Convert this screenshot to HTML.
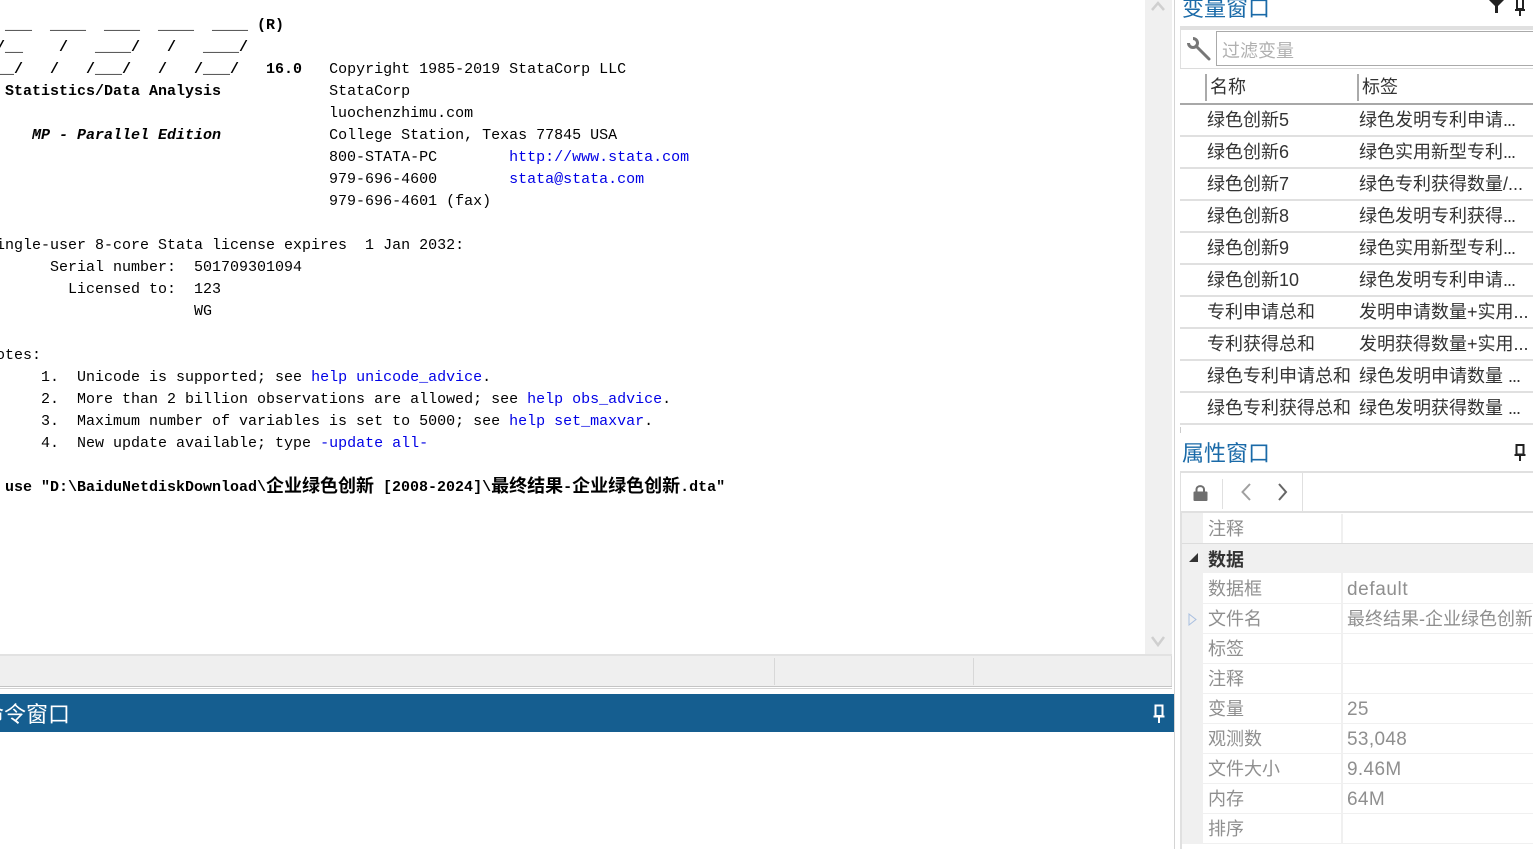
<!DOCTYPE html>
<html lang="zh"><head><meta charset="utf-8"><title>Stata</title>
<style>
html,body{margin:0;padding:0;background:#fff}
#p{position:relative;width:1533px;height:849px;overflow:hidden;background:#fff}
.a{position:absolute}
pre{position:absolute;left:-13px;top:15px;margin:0;font:15px/22px "Liberation Mono",monospace;color:#000;white-space:pre}
pre b{font-weight:bold}
pre i{font-weight:bold;font-style:italic}
pre u{text-decoration:none;color:#0000e6}
.c{font-family:"Noto Sans CJK SC",sans-serif;font-size:18px;letter-spacing:0;font-weight:bold;line-height:0;position:relative;top:1px}
.s{font-family:"Liberation Sans","Noto Sans CJK SC",sans-serif;white-space:nowrap}
.t{font-size:22px;color:#1a6aa8;line-height:30px;left:1182px}
.r{font-size:18px;color:#333;line-height:26px}
.g{font-size:18px;color:#8f8f8f;line-height:26px}
.d{letter-spacing:-1px}
.v{font-size:19px;letter-spacing:.35px}
</style></head><body><div id="p">
<pre><b>  ___  ____  ____  ____  ____ (R)
 /__    /   ____/   /   ____/
___/   /   /___/   /   /___/   16.0   </b>Copyright 1985-2019 StataCorp LLC
<b>  Statistics/Data Analysis</b>            StataCorp
                                      luochenzhimu.com
     <i>MP - Parallel Edition</i>            College Station, Texas 77845 USA
                                      800-STATA-PC        <u>http://www.stata.com</u>
                                      979-696-4600        <u>stata@stata.com</u>
                                      979-696-4601 (fax)

Single-user 8-core Stata license expires  1 Jan 2032:
       Serial number:  501709301094
         Licensed to:  123
                       WG

Notes:
      1.  Unicode is supported; see <u>help unicode_advice</u>.
      2.  More than 2 billion observations are allowed; see <u>help obs_advice</u>.
      3.  Maximum number of variables is set to 5000; see <u>help set_maxvar</u>.
      4.  New update available; type <u>-update all-</u>

<b>. use "D:\BaiduNetdiskDownload\<span class="c">企业绿色创新</span> [2008-2024]\<span class="c">最终结果</span>-<span class="c">企业绿色创新</span>.dta"</b></pre>

<!-- scrollbar -->
<div class="a" style="left:1145px;top:0;width:27px;height:654px;background:#f0f0f0"></div>
<svg class="a" style="left:1150px;top:0" width="16" height="14"><path d="M2 10L8 3L14 10" fill="none" stroke="#cfcfcf" stroke-width="2.5"/></svg>
<svg class="a" style="left:1150px;top:634px" width="16" height="14"><path d="M2 3L8 11L14 3" fill="none" stroke="#cfcfcf" stroke-width="2.5"/></svg>

<!-- status bar -->
<div class="a" style="left:0;top:654px;width:1172px;height:2px;background:#e2e2e2"></div>
<div class="a" style="left:0;top:656px;width:1172px;height:30px;background:#efefef"></div>
<div class="a" style="left:774px;top:658px;width:1px;height:27px;background:#d8d8d8"></div>
<div class="a" style="left:973px;top:658px;width:1px;height:27px;background:#d8d8d8"></div>
<div class="a" style="left:0;top:686px;width:1172px;height:1px;background:#c4c4c4"></div>
<div class="a" style="left:0;top:688px;width:1172px;height:1px;background:#d4d4d4"></div>
<div class="a" style="left:1171px;top:656px;width:1px;height:30px;background:#dcdcdc"></div>

<!-- command bar -->
<div class="a" style="left:0;top:694px;width:1174px;height:38px;background:#155e90"></div>
<div class="a s" style="left:-18px;top:700px;font-size:22px;line-height:30px;color:#fff">命令窗口</div>
<svg class="a" style="left:1152px;top:704px" width="14" height="20"><path d="M3.500 1.500H10.500V12H3.500ZM1.500 12.500H12.500M7 13V19" fill="none" stroke="#fff" stroke-width="2"/></svg>

<!-- vertical splitter -->
<div class="a" style="left:1174px;top:0;width:1px;height:849px;background:#d4d4d4"></div>

<!-- variables window -->
<div class="a s t" style="top:-6px">变量窗口</div>
<svg class="a" style="left:1488px;top:0" width="18" height="14"><path d="M1 0H16L10 6V13H7V6Z" fill="#222"/></svg>
<svg class="a" style="left:1513px;top:0" width="14" height="18"><path d="M4 0V9H10V0M2 10H12M7 10V16" fill="none" stroke="#222" stroke-width="2"/></svg>
<div class="a" style="left:1180px;top:26px;width:353px;height:4px;background:#e0e0e0"></div>
<div class="a" style="left:1180px;top:30px;width:1px;height:38px;background:#e0e0e0"></div>
<div class="a" style="left:1180px;top:68px;width:353px;height:1px;background:#dcdcdc"></div>
<svg class="a" style="left:1186px;top:36px" width="26" height="26"><path d="M7 2.500A4.500 4.500 0 1 1 2.500 7" fill="none" stroke="#777" stroke-width="3"/><path d="M10 10L23 23" stroke="#777" stroke-width="3" stroke-linecap="round"/></svg>
<div class="a" style="left:1216px;top:31px;width:320px;height:33px;border:1px solid #aaa"></div>
<div class="a s" style="left:1222px;top:38px;font-size:18px;line-height:26px;color:#b0b0b0">过滤变量</div>
<div class="a" style="left:1205px;top:74px;width:2px;height:27px;background:#aaa"></div>
<div class="a" style="left:1357px;top:74px;width:2px;height:27px;background:#aaa"></div>
<div class="a s r" style="left:1210px;top:74px">名称</div>
<div class="a s r" style="left:1362px;top:74px">标签</div>
<div class="a" style="left:1180px;top:103px;width:353px;height:2px;background:#a8a8a8"></div>

<div class="a s r" style="left:1207px;top:107px">绿色创新5</div><div class="a s r" style="left:1359px;top:107px">绿色发明专利申请<span class="d">...</span></div>
<div class="a s r" style="left:1207px;top:139px">绿色创新6</div><div class="a s r" style="left:1359px;top:139px">绿色实用新型专利<span class="d">...</span></div>
<div class="a s r" style="left:1207px;top:171px">绿色创新7</div><div class="a s r" style="left:1359px;top:171px">绿色专利获得数量/...</div>
<div class="a s r" style="left:1207px;top:203px">绿色创新8</div><div class="a s r" style="left:1359px;top:203px">绿色发明专利获得<span class="d">...</span></div>
<div class="a s r" style="left:1207px;top:235px">绿色创新9</div><div class="a s r" style="left:1359px;top:235px">绿色实用新型专利<span class="d">...</span></div>
<div class="a s r" style="left:1207px;top:267px">绿色创新10</div><div class="a s r" style="left:1359px;top:267px">绿色发明专利申请<span class="d">...</span></div>
<div class="a s r" style="left:1207px;top:299px">专利申请总和</div><div class="a s r" style="left:1359px;top:299px">发明申请数量+实用...</div>
<div class="a s r" style="left:1207px;top:331px">专利获得总和</div><div class="a s r" style="left:1359px;top:331px">发明获得数量+实用...</div>
<div class="a s r" style="left:1207px;top:363px">绿色专利申请总和</div><div class="a s r" style="left:1359px;top:363px">绿色发明申请数量 <span class="d">...</span></div>
<div class="a s r" style="left:1207px;top:395px">绿色专利获得总和</div><div class="a s r" style="left:1359px;top:395px">绿色发明获得数量 <span class="d">...</span></div>

<div class="a" style="left:1180px;top:135px;width:353px;height:2px;background:#e0e0e0"></div>
<div class="a" style="left:1180px;top:167px;width:353px;height:2px;background:#e0e0e0"></div>
<div class="a" style="left:1180px;top:199px;width:353px;height:2px;background:#e0e0e0"></div>
<div class="a" style="left:1180px;top:231px;width:353px;height:2px;background:#e0e0e0"></div>
<div class="a" style="left:1180px;top:263px;width:353px;height:2px;background:#e0e0e0"></div>
<div class="a" style="left:1180px;top:295px;width:353px;height:2px;background:#e0e0e0"></div>
<div class="a" style="left:1180px;top:327px;width:353px;height:2px;background:#e0e0e0"></div>
<div class="a" style="left:1180px;top:359px;width:353px;height:2px;background:#e0e0e0"></div>
<div class="a" style="left:1180px;top:391px;width:353px;height:2px;background:#e0e0e0"></div>
<div class="a" style="left:1180px;top:423px;width:353px;height:2px;background:#e0e0e0"></div>
<div class="a" style="left:1180px;top:427px;width:1px;height:6px;background:#ccc"></div>

<!-- properties window -->
<div class="a s t" style="top:439px">属性窗口</div>
<svg class="a" style="left:1513px;top:444px" width="14" height="18"><path d="M3.500 1V10.500H10.500V1M2.500 1H11.500M1.500 11H12.500M7 11V17" fill="none" stroke="#222" stroke-width="2"/></svg>
<div class="a" style="left:1180px;top:471px;width:353px;height:2px;background:#e0e0e0"></div>
<div class="a" style="left:1180px;top:473px;width:1px;height:38px;background:#e0e0e0"></div>
<div class="a" style="left:1302px;top:473px;width:1px;height:38px;background:#e0e0e0"></div>
<div class="a" style="left:1222px;top:479px;width:1px;height:30px;background:#e0e0e0"></div>
<div class="a" style="left:1180px;top:511px;width:353px;height:2px;background:#e0e0e0"></div>
<svg class="a" style="left:1192px;top:484px" width="17" height="18"><path d="M4.500 8V5.500C4.500 1 12 1 12 5.500V8" fill="none" stroke="#6f6f6f" stroke-width="2"/><rect x="1.500" y="7.500" width="14" height="9.500" rx="1" fill="#6f6f6f"/></svg>
<svg class="a" style="left:1239px;top:482px" width="14" height="20"><path d="M11 2L3.500 10L11 18" fill="none" stroke="#a0a0a0" stroke-width="2"/></svg>
<svg class="a" style="left:1275px;top:482px" width="14" height="20"><path d="M4 2L11 10L4 18" fill="none" stroke="#666" stroke-width="2"/></svg>

<div class="a" style="left:1180px;top:513px;width:2px;height:336px;background:#e0e0e0"></div>
<div class="a" style="left:1182px;top:513px;width:21px;height:331px;background:#f0f0f0"></div>
<div class="a" style="left:1341px;top:514px;width:2px;height:330px;background:#f0f0f0"></div>
<div class="a" style="left:1182px;top:544px;width:351px;height:29px;background:#f0f0f0"></div>
<div class="a" style="left:1182px;top:543px;width:351px;height:1px;background:#dcdcdc"></div>
<div class="a" style="left:1203px;top:603px;width:330px;height:1px;background:#f0f0f0"></div>
<div class="a" style="left:1203px;top:633px;width:330px;height:1px;background:#f0f0f0"></div>
<div class="a" style="left:1203px;top:663px;width:330px;height:1px;background:#f0f0f0"></div>
<div class="a" style="left:1203px;top:693px;width:330px;height:1px;background:#f0f0f0"></div>
<div class="a" style="left:1203px;top:723px;width:330px;height:1px;background:#f0f0f0"></div>
<div class="a" style="left:1203px;top:753px;width:330px;height:1px;background:#f0f0f0"></div>
<div class="a" style="left:1203px;top:783px;width:330px;height:1px;background:#f0f0f0"></div>
<div class="a" style="left:1203px;top:813px;width:330px;height:1px;background:#f0f0f0"></div>
<div class="a" style="left:1182px;top:843px;width:351px;height:1px;background:#f0f0f0"></div>

<svg class="a" style="left:1188px;top:552px" width="11" height="11"><path d="M10 1V10H1Z" fill="#333"/></svg>
<svg class="a" style="left:1188px;top:613px" width="10" height="13"><path d="M1 1L8 6.500L1 12Z" fill="none" stroke="#a9bfe0" stroke-width="1"/></svg>

<div class="a s g" style="left:1208px;top:516px">注释</div>
<div class="a s" style="left:1208px;top:547px;font-size:18px;line-height:26px;font-weight:bold;color:#333">数据</div>
<div class="a s g" style="left:1208px;top:576px">数据框</div><div class="a s g v" style="left:1347px;top:577px;letter-spacing:.6px">default</div>
<div class="a s g" style="left:1208px;top:606px">文件名</div><div class="a s g" style="left:1347px;top:606px;width:185px;overflow:hidden">最终结果-企业绿色创新</div>
<div class="a s g" style="left:1208px;top:636px">标签</div>
<div class="a s g" style="left:1208px;top:666px">注释</div>
<div class="a s g" style="left:1208px;top:696px">变量</div><div class="a s g v" style="left:1347px;top:697px">25</div>
<div class="a s g" style="left:1208px;top:726px">观测数</div><div class="a s g v" style="left:1347px;top:727px">53,048</div>
<div class="a s g" style="left:1208px;top:756px">文件大小</div><div class="a s g v" style="left:1347px;top:757px">9.46M</div>
<div class="a s g" style="left:1208px;top:786px">内存</div><div class="a s g v" style="left:1347px;top:787px">64M</div>
<div class="a s g" style="left:1208px;top:816px">排序</div>
</div></body></html>
